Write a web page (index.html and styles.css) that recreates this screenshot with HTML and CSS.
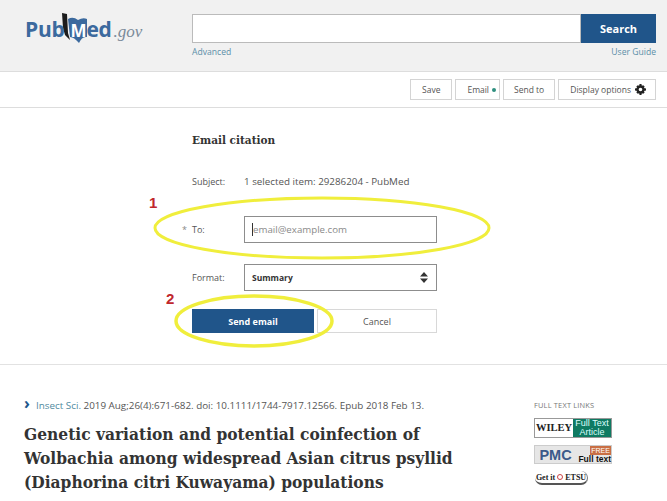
FILE: index.html
```html
<!DOCTYPE html>
<html lang="en">
<head>
  <meta charset="UTF-8">
  <meta name="viewport" content="width=device-width, initial-scale=1.0">
  <title>PubMed - Email citation</title>
  <link rel="stylesheet" href="styles.css">
</head>
<body>
  <header class="site-header">
    <div class="logo">
      <span class="logo-word">Pub</span>
      <svg class="logo-book" width="27" height="31" viewBox="0 0 27 31">
        <path d="M0 0 L5 1 L6 20 L8 27 L3 22 L1 15 Z" fill="#1c1c1c"/>
        <path d="M6 6 Q11 3 16 7 Q21 4 25 6 L25 24 Q20 23 17 30 Q12 24 8 24 Z" fill="#3c6a9e"/>
      </svg>
      <span class="logo-m">M</span><span class="logo-word">ed</span><span class="logo-gov">.gov</span>
    </div>
    <div class="search">
      <div class="search-row">
        <div class="search-input"></div>
        <button class="search-btn">Search</button>
      </div>
      <div class="search-links">
        <a>Advanced</a>
        <a>User Guide</a>
      </div>
    </div>
  </header>

  <nav class="toolbar">
    <button class="tool">Save</button>
    <button class="tool tool-email">Email<span class="dot"></span></button>
    <button class="tool tool-send">Send to</button>
    <button class="tool tool-display">Display options
      <svg width="11" height="11" viewBox="0 0 24 24"><path fill="#222" fill-rule="evenodd" d="M10 0h4l1 4 3-1.500 3 3L19.500 8.500 24 10v4l-4.500 1.500L21 18.500l-3 3-3-1.500-1 4h-4l-1-4-3 1.500-3-3L4.500 15.500 0 14v-4l4.500-1.500L3 5.500l3-3L9 4zM12 8a4 4 0 1 0 0 8 4 4 0 0 0 0-8z"/></svg>
    </button>
  </nav>

  <main class="email-form">
    <h2 class="form-title">Email citation</h2>
    <div class="row row-subject">
      <span class="row-label">Subject:</span>
      <span>1 selected item: 29286204 - PubMed</span>
    </div>
    <div class="row row-to">
      <span class="row-label"><i class="req">*</i>To:</span>
      <div class="field"><span class="caret"></span>email@example.com</div>
    </div>
    <div class="row row-format">
      <span class="row-label">Format:</span>
      <div class="field field-select">
        <b>Summary</b>
        <svg width="8" height="11" viewBox="0 0 8 11"><path d="M4 0 L8 4.500 H0 Z M0 6.500 H8 L4 11 Z" fill="#333"/></svg>
      </div>
    </div>
    <div class="form-actions">
      <button class="send">Send email</button>
      <button class="cancel">Cancel</button>
    </div>
  </main>

  <section class="article">
    <div class="article-main">
      <p class="cite"><span class="chev">&#8250;</span><a>Insect Sci.</a> 2019 Aug;26(4):671-682. doi: 10.1111/1744-7917.12566. Epub 2018 Feb 13.</p>
      <h1 class="article-title">Genetic variation and potential coinfection of Wolbachia among widespread Asian citrus psyllid (Diaphorina citri Kuwayama) populations</h1>
    </div>
    <aside class="links">
      <div class="links-head">FULL TEXT LINKS</div>
      <div class="badge wiley"><span class="wiley-name">WILEY</span><span class="wiley-tag">Full Text Article</span></div>
      <div class="badge pmc"><span class="pmc-name">PMC</span><span class="pmc-tag"><i>FREE</i>Full text</span></div>
      <div class="badge etsu">Get it <span class="etsu-o"></span> ETSU</div>
    </aside>
  </section>

  <!-- hand drawn markup on top of the page -->
  <svg class="marks" width="667" height="501" viewBox="0 0 667 501">
    <ellipse cx="322" cy="228" rx="167" ry="30" fill="none" stroke="#f0ee3c" stroke-width="3"/>
    <ellipse cx="254" cy="321" rx="78" ry="25" fill="none" stroke="#f0ee3c" stroke-width="3.500"/>
  </svg>
  <span class="mark-num mark-1">1</span>
  <span class="mark-num mark-2">2</span>
</body>
</html>
```

FILE: styles.css
```css
* {
  box-sizing: border-box;
}

html, body {
  height: 501px;
  overflow: hidden;
}

body {
  margin: 0;
  position: relative;
  background: #fff;
  color: #555;
  font-family: "Open Sans", "Noto Sans", sans-serif;
  font-size: 9.800px;
}

button {
  font-family: inherit;
  cursor: pointer;
}

.site-header {
  height: 72px;
  background: #f1f1f1;
  border-bottom: 1px solid #ddd;
  display: flex;
  padding: 14px 11px 0 25px;
}

.logo {
  width: 167px;
  height: 32px;
  display: flex;
  align-items: baseline;
  padding-top: 1px;
  position: relative;
  color: #3c6a9e;
}

.logo-word {
  font-size: 21px;
  font-weight: 700;
  letter-spacing: -0.3px;
  position: relative;
  z-index: 1;
}

.logo-m {
  font-size: 17px;
  font-weight: 700;
  color: #fff;
  margin-left: 6px;
  position: relative;
  z-index: 1;
}

.logo-book {
  position: absolute;
  left: 37px;
  top: -1px;
}

.logo-gov {
  font-family: "Liberation Serif", serif;
  font-style: italic;
  font-size: 17px;
  color: #7a8a99;
  margin-left: 2px;
}

.search {
  flex: 1;
}

.search-row {
  display: flex;
  height: 29px;
}

.search-input {
  flex: 1;
  background: #fff;
  border: 1px solid #bbb;
}

.search-btn {
  width: 75px;
  border: none;
  background: #20558a;
  color: #fff;
  font-size: 11px;
  font-weight: 700;
  padding-bottom: 2px;
}

.search-links {
  display: flex;
  justify-content: space-between;
  margin-top: 3px;
  font-size: 8.600px;
  color: #5b8fa8;
}

.toolbar {
  height: 36px;
  border-bottom: 1px solid #ddd;
  display: flex;
  justify-content: flex-end;
  align-items: flex-start;
  gap: 3px;
  padding: 7px 11px 0 0;
}

.tool {
  height: 21px;
  padding: 0 11px;
  background: #fff;
  border: 1px solid #d4d4d4;
  color: #555;
  font-size: 8.500px;
  display: flex;
  align-items: center;
  gap: 3px;
}

.tool-email {
  padding-right: 3px;
}

.tool-send {
  padding: 0 10px;
}

.tool-display {
  gap: 4px;
  padding-right: 9px;
}

.dot {
  width: 4px;
  height: 4px;
  border-radius: 50%;
  background: #2f8f7f;
}

.email-form {
  height: 257px;
  border-bottom: 1px solid #e2e2e2;
  padding: 24px 0 0 192px;
  width: 100%;
}

.form-title {
  margin: 0;
  height: 17px;
  font-family: "DejaVu Serif Condensed", "DejaVu Serif", serif;
  font-size: 11.700px;
  line-height: 17px;
  font-weight: 700;
  color: #333;
}

.row {
  display: flex;
  align-items: center;
  width: 245px;
}

.row-label {
  width: 52px;
  flex: none;
  position: relative;
  font-size: 9px;
  color: #555;
}

.req {
  position: absolute;
  left: -10px;
  color: #888;
  font-style: normal;
}

.row-subject {
  margin-top: 26px;
  height: 12px;
  white-space: nowrap;
}

.row-to {
  margin-top: 29px;
}

.row-format {
  margin-top: 21px;
}

.field {
  width: 193px;
  height: 27px;
  border: 1px solid #8d8d8d;
  padding-left: 7px;
  display: flex;
  align-items: center;
  font-size: 9.700px;
  color: #8a8a8a;
}

.caret {
  width: 1px;
  height: 13px;
  background: #333;
}

.field-select {
  justify-content: space-between;
  padding-right: 8px;
  color: #333;
  font-size: 8.500px;
}

.form-actions {
  display: flex;
  gap: 3px;
  margin-top: 18px;
  width: 245px;
}

.send {
  width: 122px;
  height: 24px;
  border: none;
  background: #20558a;
  color: #fff;
  font-size: 9px;
  font-weight: 700;
}

.cancel {
  width: 120px;
  height: 24px;
  border: 1px solid #d8d8d8;
  background: #fff;
  color: #555;
  font-size: 9px;
}

.article {
  display: flex;
  padding: 32px 0 0 24px;
}

.article-main {
  width: 510px;
}

.cite {
  margin: 0;
  height: 14px;
  line-height: 14px;
  font-size: 9.850px;
  color: #555;
  white-space: nowrap;
}

.cite a {
  color: #4f8aa0;
}

.chev {
  display: inline-block;
  width: 12px;
  color: #20558a;
  font-weight: 700;
  font-size: 16px;
  line-height: 12px;
}

.article-title {
  margin: 11px 0 0;
  width: 436px;
  font-family: "DejaVu Serif Condensed", "DejaVu Serif", serif;
  font-size: 17.200px;
  line-height: 24px;
  font-weight: 700;
  color: #333;
}

.links {
  padding-top: 3px;
}

.links-head {
  font-size: 7.400px;
  letter-spacing: 0.2px;
  color: #777;
  margin-bottom: 8px;
  white-space: nowrap;
}

.badge {
  display: flex;
  font-family: "Liberation Serif", serif;
}

.wiley {
  width: 78px;
  height: 20px;
  border: 1px solid #999;
  margin-bottom: 7px;
}

.wiley-name {
  width: 38px;
  text-align: center;
  font-size: 10.500px;
  line-height: 18px;
  font-weight: 700;
  color: #222;
}

.wiley-tag {
  flex: 1;
  background: #0f7a62;
  color: #dff;
  font-family: "Liberation Sans", sans-serif;
  font-size: 9px;
  line-height: 9px;
  text-align: center;
}

.pmc {
  width: 78px;
  height: 19px;
  background: #e6e6e6;
  border: 1px solid #ccc;
  margin-bottom: 7px;
  font-family: "Liberation Sans", sans-serif;
}

.pmc-name {
  width: 41px;
  text-align: center;
  font-size: 14.500px;
  line-height: 18px;
  font-weight: 700;
  color: #3c5a8a;
}

.pmc-tag {
  flex: 1;
  font-size: 8.500px;
  line-height: 9px;
  font-weight: 700;
  color: #111;
  text-align: right;
  white-space: nowrap;
}

.pmc-tag i {
  display: block;
  width: 21px;
  margin-left: auto;
  text-align: center;
  font-size: 7px;
  background: #c96f44;
  color: #fff;
  font-style: normal;
  font-weight: 400;
}

.etsu {
  width: 53px;
  height: 14px;
  margin-left: 1px;
  border-radius: 7px;
  border-bottom: 2px solid #555;
  border-right: 1px solid #777;
  background: #fff;
  color: #222;
  font-size: 8px;
  font-weight: 700;
  align-items: center;
  justify-content: center;
  gap: 2px;
  white-space: nowrap;
}

.etsu-o {
  width: 6px;
  height: 6px;
  border: 1px solid #c44;
  border-radius: 50%;
}

.marks {
  position: absolute;
  left: 0;
  top: 0;
  pointer-events: none;
}

.mark-num {
  position: absolute;
  font-family: "Liberation Sans", sans-serif;
  font-size: 15px;
  font-weight: 700;
  color: #c0272d;
}

.mark-1 {
  left: 149px;
  top: 194px;
}

.mark-2 {
  left: 166px;
  top: 290px;
}
```
